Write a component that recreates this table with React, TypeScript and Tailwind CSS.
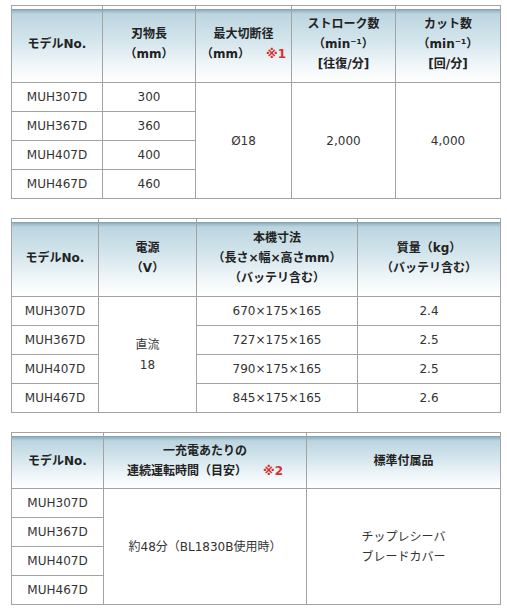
import React from "react";

const font = "font-['DejaVu_Sans','Noto_Sans_CJK_JP',sans-serif]";
const head =
  "flex items-center justify-center text-center font-bold text-[12px] leading-[20px] text-[#222] bg-[linear-gradient(to_bottom,#fff_0px,#fff_3px,#7e9dab_3px,#9dbac8_5px,#bcd5e0_8px,#d3e5ec_45%,#eef5f8_75%,#fff_100%)]";
const cell =
  "flex items-center justify-center bg-white text-center text-[12px] leading-[20px] text-[#333]";

const models = ["MUH307D", "MUH367D", "MUH407D", "MUH467D"];

function Note({ n }: { n: string }) {
  return <span className="ml-4 text-[#d8312d]">※{n}</span>;
}

export default function App() {
  return (
    <div className={`${font} bg-white pl-[11px] pt-[5px] w-[507px] h-[616px]`}>
      {/* 仕様1 */}
      <div className="grid w-[490px] grid-cols-[90px_92px_95px_103px_104px] grid-rows-[76px_28px_28px_28px_28px] gap-px bg-[#a3a3a3] p-px">
        <div className={head}>モデルNo.</div>
        <div className={head}>
          <div>
            刃物長
            <br />
            （mm）
          </div>
        </div>
        <div className={head}>
          <div>
            最大切断径
            <br />
            （mm）
            <Note n="1" />
          </div>
        </div>
        <div className={head}>
          <div>
            ストローク数
            <br />
            （min⁻¹）
            <br />
            [往復/分]
          </div>
        </div>
        <div className={head}>
          <div>
            カット数
            <br />
            （min⁻¹）
            <br />
            [回/分]
          </div>
        </div>

        <div className={cell}>{models[0]}</div>
        <div className={cell}>300</div>
        <div className={`${cell} row-span-4`}>Ø18</div>
        <div className={`${cell} row-span-4`}>2,000</div>
        <div className={`${cell} row-span-4`}>4,000</div>
        <div className={cell}>{models[1]}</div>
        <div className={cell}>360</div>
        <div className={cell}>{models[2]}</div>
        <div className={cell}>400</div>
        <div className={cell}>{models[3]}</div>
        <div className={cell}>460</div>
      </div>

      {/* 仕様2 */}
      <div className="mt-[19px] grid w-[490px] grid-cols-[86px_97px_160px_142px] grid-rows-[77px_28px_28px_28px_28px] gap-px bg-[#a3a3a3] p-px">
        <div className={head}>モデルNo.</div>
        <div className={head}>
          <div>
            電源
            <br />
            （V）
          </div>
        </div>
        <div className={head}>
          <div>
            本機寸法
            <br />
            （長さ×幅×高さmm）
            <br />
            （バッテリ含む）
          </div>
        </div>
        <div className={head}>
          <div>
            質量（kg）
            <br />
            （バッテリ含む）
          </div>
        </div>

        <div className={cell}>{models[0]}</div>
        <div className={`${cell} row-span-4`}>
          <div>
            直流
            <br />
            18
          </div>
        </div>
        <div className={cell}>670×175×165</div>
        <div className={cell}>2.4</div>
        <div className={cell}>{models[1]}</div>
        <div className={cell}>727×175×165</div>
        <div className={cell}>2.5</div>
        <div className={cell}>{models[2]}</div>
        <div className={cell}>790×175×165</div>
        <div className={cell}>2.5</div>
        <div className={cell}>{models[3]}</div>
        <div className={cell}>845×175×165</div>
        <div className={cell}>2.6</div>
      </div>

      {/* 仕様3 */}
      <div className="mt-[19px] grid w-[490px] grid-cols-[91px_202px_193px] grid-rows-[55px_28px_28px_28px_28px] gap-px bg-[#a3a3a3] p-px">
        <div className={head}>モデルNo.</div>
        <div className={head}>
          <div>
            一充電あたりの
            <br />
            連続運転時間（目安）
            <Note n="2" />
          </div>
        </div>
        <div className={head}>標準付属品</div>

        <div className={cell}>{models[0]}</div>
        <div className={`${cell} row-span-4`}>約48分（BL1830B使用時）</div>
        <div className={`${cell} row-span-4`}>
          <div>
            チップレシーバ
            <br />
            ブレードカバー
          </div>
        </div>
        <div className={cell}>{models[1]}</div>
        <div className={cell}>{models[2]}</div>
        <div className={cell}>{models[3]}</div>
      </div>
    </div>
  );
}
